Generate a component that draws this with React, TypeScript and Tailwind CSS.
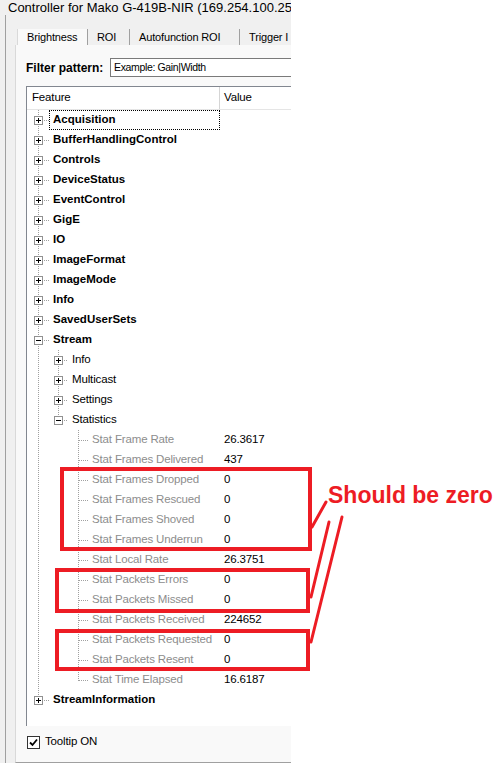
import React from "react";

type Kind = "plus" | "minus" | "leaf";

interface TreeRow {
  label: string;
  level: 0 | 1 | 2;
  kind: Kind;
  value?: string;
}

const rows: TreeRow[] = [
  { label: "Acquisition", level: 0, kind: "plus" },
  { label: "BufferHandlingControl", level: 0, kind: "plus" },
  { label: "Controls", level: 0, kind: "plus" },
  { label: "DeviceStatus", level: 0, kind: "plus" },
  { label: "EventControl", level: 0, kind: "plus" },
  { label: "GigE", level: 0, kind: "plus" },
  { label: "IO", level: 0, kind: "plus" },
  { label: "ImageFormat", level: 0, kind: "plus" },
  { label: "ImageMode", level: 0, kind: "plus" },
  { label: "Info", level: 0, kind: "plus" },
  { label: "SavedUserSets", level: 0, kind: "plus" },
  { label: "Stream", level: 0, kind: "minus" },
  { label: "Info", level: 1, kind: "plus" },
  { label: "Multicast", level: 1, kind: "plus" },
  { label: "Settings", level: 1, kind: "plus" },
  { label: "Statistics", level: 1, kind: "minus" },
  { label: "Stat Frame Rate", level: 2, kind: "leaf", value: "26.3617" },
  { label: "Stat Frames Delivered", level: 2, kind: "leaf", value: "437" },
  { label: "Stat Frames Dropped", level: 2, kind: "leaf", value: "0" },
  { label: "Stat Frames Rescued", level: 2, kind: "leaf", value: "0" },
  { label: "Stat Frames Shoved", level: 2, kind: "leaf", value: "0" },
  { label: "Stat Frames Underrun", level: 2, kind: "leaf", value: "0" },
  { label: "Stat Local Rate", level: 2, kind: "leaf", value: "26.3751" },
  { label: "Stat Packets Errors", level: 2, kind: "leaf", value: "0" },
  { label: "Stat Packets Missed", level: 2, kind: "leaf", value: "0" },
  { label: "Stat Packets Received", level: 2, kind: "leaf", value: "224652" },
  { label: "Stat Packets Requested", level: 2, kind: "leaf", value: "0" },
  { label: "Stat Packets Resent", level: 2, kind: "leaf", value: "0" },
  { label: "Stat Time Elapsed", level: 2, kind: "leaf", value: "16.6187" },
  { label: "StreamInformation", level: 0, kind: "plus" },
];

const gutter = [22, 41, 61];
const dot = { stroke: "#a0a0a0", strokeDasharray: "1 1", strokeWidth: 1 };

// which guide lines pass through row i
function guide(i: number, start: number, end: number): "full" | "half" | null {
  if (i < start || i > end) return null;
  return i === end ? "half" : "full";
}

function Guides({ row, i }: { row: TreeRow; i: number }) {
  const w = gutter[row.level];
  const cx = 11 + row.level * 20;
  const lines = [guide(i, 0, 29), guide(i, 12, 15), guide(i, 16, 28)];
  return (
    <svg width={w} height={20} className="shrink-0" shapeRendering="crispEdges">
      {lines.map((g, k) => {
        const x = 11 + k * 20;
        if (!g || x >= w) return null;
        return <line key={k} x1={x + 0.5} x2={x + 0.5} y1={0} y2={g === "full" ? 20 : 11} {...dot} />;
      })}
      {row.kind === "leaf" ? (
        <line x1={cx + 1} x2={w} y1={10.5} y2={10.5} {...dot} />
      ) : (
        <>
          <line x1={cx + 6} x2={w} y1={10.5} y2={10.5} {...dot} />
          <rect x={cx - 3.5} y={6.5} width={8} height={8} fill="#fff" stroke="#919191" />
          <line x1={cx - 2} x2={cx + 3} y1={10.5} y2={10.5} stroke="#000" />
          {row.kind === "plus" && <line x1={cx + 0.5} x2={cx + 0.5} y1={8} y2={13} stroke="#000" />}
        </>
      )}
    </svg>
  );
}

function Row({ row, i }: { row: TreeRow; i: number }) {
  const focused = i === 0;
  const labelClass =
    row.level === 0
      ? "font-bold text-black tracking-normal"
      : row.level === 1
        ? "text-black"
        : "text-[#8d8d8d]";
  return (
    <div className="flex h-[20px] items-center">
      <div className="flex w-[193px] shrink-0 items-center">
        <Guides row={row} i={i} />
        <div
          className={`flex h-[20px] flex-1 items-center whitespace-nowrap pl-[3px] ${labelClass} ${
            focused ? "border border-dotted border-black" : "border border-transparent"
          }`}
        >
          {row.label}
        </div>
      </div>
      <div className="pl-[4px] text-black">{row.value}</div>
    </div>
  );
}

const tabs = [
  { label: "Brightness", w: "w-[71px]" },
  { label: "ROI", w: "w-[42px]" },
  { label: "Autofunction ROI", w: "w-[110px]" },
  { label: "Trigger I", w: "w-[60px]" },
];

export default function App() {
  return (
    <div className="relative h-[771px] w-[501px] overflow-hidden bg-white font-['Liberation_Sans',Arial,sans-serif] text-[11.5px] tracking-[-0.15px] text-black">
      <div className="flex h-[763px] w-[291px] flex-col overflow-hidden bg-[#f0f0f0]">
        <div className="h-[15px] overflow-hidden whitespace-nowrap pl-[8px] text-[13px] leading-[15px] tracking-normal">
          Controller for Mako G-419B-NIR (169.254.100.25
        </div>
        <div className="ml-[5px] flex flex-1 flex-col border-l border-[#a0a0a0] pt-[13px]">
          {/* tab strip */}
          <div className="ml-[11px] flex h-[17px] whitespace-nowrap pt-[1px] text-[11px]">
            {tabs.map((t, k) => (
              <div
                key={t.label}
                className={`${t.w} flex shrink-0 items-center border-r border-[#a0a0a0] pl-[9px] ${
                  k === 0 ? "border-l border-l-[#d9d9d9] bg-[#f9f9f9]" : ""
                }`}
              >
                {t.label}
              </div>
            ))}
          </div>

          {/* tab panel */}
          <div className="ml-[9px] flex flex-1 flex-col border-b border-l border-[#a0a0a0] border-l-[#d9d9d9] bg-[#f9f9f9] pl-[10px] pt-[13px]">
            <div className="flex h-[19px] items-center">
              <div className="w-[84px] shrink-0 text-[12px] font-bold tracking-normal">Filter pattern:</div>
              <div className="flex h-[19px] flex-1 items-center border-y border-l border-[#7a7a7a] bg-white pl-[3px] text-[10.5px] tracking-[-0.35px]">
                Example: Gain|Width
              </div>
            </div>

            <div className="mt-[9px] flex h-[640px] flex-col border-l border-t border-[#828790] bg-white">
              <div className="flex h-[23px] border-b border-[#e5e5e5]">
                <div className="flex w-[193px] items-center border-r border-[#d5d5d5] pl-[5px]">Feature</div>
                <div className="flex items-center pl-[4px]">Value</div>
              </div>
              {rows.map((r, i) => (
                <Row key={i} row={r} i={i} />
              ))}
            </div>

            <div className="flex flex-1 items-center gap-[5px] pb-[4px] pl-[1px]">
              <div className="flex h-[13px] w-[13px] items-center justify-center border border-[#333] bg-white">
                <svg width="9" height="9" viewBox="0 0 9 9">
                  <path d="M1 4.5 L3.5 7 L8 1.5" fill="none" stroke="#000" strokeWidth="1.8" />
                </svg>
              </div>
              <span>Tooltip ON</span>
            </div>
          </div>
        </div>
      </div>

      {/* red annotations drawn over the screenshot */}
      <svg className="pointer-events-none absolute inset-0" width={501} height={771}>
        <g fill="none" stroke="#ed1c24" strokeWidth={4}>
          <rect x={62} y={469} width={248} height={80} />
          <rect x={57} y={570} width={251} height={41} />
          <rect x={57} y={631} width={251} height={38} />
        </g>
        <g stroke="#ed1c24" strokeWidth={3} strokeLinecap="round">
          <line x1={326} y1={502} x2={312} y2={527} />
          <line x1={329} y1={522} x2={311} y2={597} />
          <line x1={342} y1={517} x2={311} y2={642} />
        </g>
      </svg>
      <div className="absolute left-[328px] top-[481px] whitespace-nowrap text-[23px] font-bold leading-[28px] tracking-normal text-[#ed1c24]">
        Should be zero
      </div>
    </div>
  );
}
